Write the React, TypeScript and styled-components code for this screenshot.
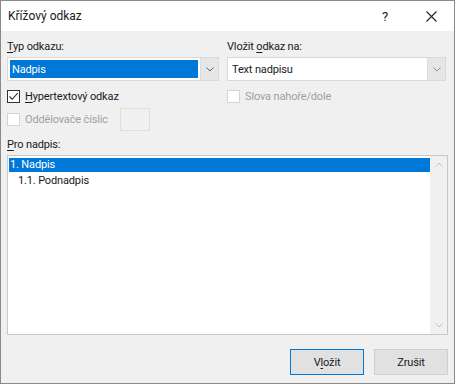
import React from 'react';
import styled, { createGlobalStyle } from 'styled-components';

const GlobalStyle = createGlobalStyle`
  html, body {
    margin: 0;
    padding: 0;
    background: #ffffff;
  }
  body {
    font-family: "Segoe UI", Roboto, "Noto Sans", sans-serif;
    font-size: 11px;
    letter-spacing: -0.15px;
    color: #1a1a1a;
  }
`;

const Window = styled.div`
  width: 455px;
  height: 384px;
  box-sizing: border-box;
  border: 1px solid #8a8a8a;
  background: #f0f0f0;
  display: flex;
  flex-direction: column;
`;

const TitleBar = styled.div`
  height: 30px;
  background: #ffffff;
  display: flex;
  align-items: center;
  padding-left: 7px;
`;

const Title = styled.div`
  flex: 1;
  font-size: 12px;
  letter-spacing: 0;
  color: #1a1a1a;
`;

const TitleButton = styled.div`
  width: 46px;
  height: 30px;
  display: flex;
  align-items: center;
  justify-content: center;
  color: #222;
  font-size: 13px;
`;

const Body = styled.div`
  flex: 1;
  display: flex;
  flex-direction: column;
  padding: 8px 6px 8px 6px;
`;

const TopGrid = styled.div`
  display: grid;
  grid-template-columns: 212px 219px;
  column-gap: 8px;
`;

const Column = styled.div`
  display: flex;
  flex-direction: column;
`;

const Label = styled.div`
  height: 16px;
  line-height: 16px;
  margin-bottom: 2px;
  color: #1a1a1a;
`;

const Mn = styled.span`
  text-decoration: underline;
  text-underline-offset: 2px;
`;

const Select = styled.div`
  height: 24px;
  box-sizing: border-box;
  border: 1px solid #d9d9d9;
  background: #ffffff;
  display: flex;
  align-items: stretch;
`;

const SelectValue = styled.div<{ $active?: boolean }>`
  flex: 1;
  margin: 2px;
  padding-left: 2px;
  display: flex;
  align-items: center;
  background: ${p => (p.$active ? '#0078d7' : 'transparent')};
  color: ${p => (p.$active ? '#ffffff' : '#1a1a1a')};
`;

const SelectArrow = styled.div`
  width: 17px;
  background: #e6e6e6;
  border-left: 1px solid #dcdcdc;
  display: flex;
  align-items: center;
  justify-content: center;
`;

const CheckRow = styled.div<{ $disabled?: boolean }>`
  display: flex;
  align-items: center;
  gap: 5px;
  height: 23px;
  color: ${p => (p.$disabled ? '#a0a0a0' : '#1a1a1a')};
`;

const Box = styled.div<{ $disabled?: boolean }>`
  width: 13px;
  height: 13px;
  box-sizing: border-box;
  border: 1px solid ${p => (p.$disabled ? '#d4d4d4' : '#333333')};
  background: #ffffff;
  display: flex;
  align-items: center;
  justify-content: center;
`;

const SmallInput = styled.div`
  width: 30px;
  height: 23px;
  box-sizing: border-box;
  border: 1px solid #dedede;
  background: #f0f0f0;
  margin-left: 7px;
`;

const ListLabel = styled(Label)`
  margin-top: 6px;
`;

const ListBox = styled.div`
  height: 180px;
  box-sizing: border-box;
  border: 1px solid #c8c8c8;
  background: #ffffff;
  display: flex;
`;

const ListItems = styled.div`
  flex: 1;
  padding-top: 2px;
  padding-left: 1px;
`;

const ListItem = styled.div<{ $selected?: boolean; $level: number }>`
  height: 14px;
  line-height: 14px;
  padding-left: ${p => 1 + p.$level * 8}px;
  margin-bottom: 2px;
  background: ${p => (p.$selected ? '#0078d7' : 'transparent')};
  color: ${p => (p.$selected ? '#ffffff' : '#1a1a1a')};
`;

const ScrollBar = styled.div`
  width: 17px;
  background: #f0f0f0;
  display: flex;
  flex-direction: column;
  justify-content: space-between;
  align-items: center;
  padding: 6px 0 6px;
`;

const Footer = styled.div`
  margin-top: auto;
  display: flex;
  justify-content: flex-end;
  gap: 10px;
`;

const Button = styled.div<{ $default?: boolean }>`
  width: 74px;
  height: 26px;
  box-sizing: border-box;
  border: ${p => (p.$default ? '1px solid #0078d7' : '1px solid #d0d0d0')};
  background: #e1e1e1;
  display: flex;
  align-items: center;
  justify-content: center;
  color: #1a1a1a;
`;

const Chevron = ({ dir = 'down', color = '#606060' }: { dir?: 'down' | 'up'; color?: string }) => (
  <svg width="8" height="5" viewBox="0 0 8 5">
    <path
      d={dir === 'down' ? 'M0.5 0.5 L4 4 L7.5 0.5' : 'M0.5 4.5 L4 1 L7.5 4.5'}
      fill="none"
      stroke={color}
      strokeWidth="1"
    />
  </svg>
);

const Check = () => (
  <svg width="11" height="11" viewBox="0 0 11 11">
    <path d="M1.5 5.5 L4.2 8.3 L9.8 2" fill="none" stroke="#222" strokeWidth="1.1" />
  </svg>
);

const CloseIcon = () => (
  <svg width="11" height="11" viewBox="0 0 11 11">
    <path d="M0.5 0.5 L10.5 10.5 M10.5 0.5 L0.5 10.5" stroke="#222" strokeWidth="1.1" />
  </svg>
);

const App: React.FC = () => {
  const headings = [
    { id: 'h1', text: '1. Nadpis', level: 0 },
    { id: 'h2', text: '1.1. Podnadpis', level: 1 },
  ];

  return (
    <>
      <GlobalStyle />
      <Window>
        <TitleBar>
          <Title>Křížový odkaz</Title>
          <TitleButton>?</TitleButton>
          <TitleButton>
            <CloseIcon />
          </TitleButton>
        </TitleBar>

        <Body>
          <TopGrid>
            <Column>
              <Label>
                <Mn>T</Mn>yp odkazu:
              </Label>
              <Select>
                <SelectValue $active>Nadpis</SelectValue>
                <SelectArrow>
                  <Chevron />
                </SelectArrow>
              </Select>
              <CheckRow style={{ marginTop: 4 }}>
                <Box>
                  <Check />
                </Box>
                <span>
                  <Mn>H</Mn>ypertextový odkaz
                </span>
              </CheckRow>
              <CheckRow $disabled>
                <Box $disabled />
                <span>Oddělovače číslic</span>
                <SmallInput />
              </CheckRow>
            </Column>

            <Column>
              <Label>
                Vložit <Mn>o</Mn>dkaz na:
              </Label>
              <Select>
                <SelectValue>Text nadpisu</SelectValue>
                <SelectArrow>
                  <Chevron color="#909090" />
                </SelectArrow>
              </Select>
              <CheckRow $disabled style={{ marginTop: 4 }}>
                <Box $disabled />
                <span>Slova nahoře/dole</span>
              </CheckRow>
            </Column>
          </TopGrid>

          <ListLabel>
            <Mn>P</Mn>ro nadpis:
          </ListLabel>
          <ListBox>
            <ListItems>
              {headings.map((h, i) => (
                <ListItem key={h.id} $selected={i === 0} $level={h.level}>
                  {h.text}
                </ListItem>
              ))}
            </ListItems>
            <ScrollBar>
              <Chevron dir="up" color="#c0c0c0" />
              <Chevron dir="down" color="#c0c0c0" />
            </ScrollBar>
          </ListBox>

          <Footer>
            <Button $default>
              <span>
                V<Mn>l</Mn>ožit
              </span>
            </Button>
            <Button>Zrušit</Button>
          </Footer>
        </Body>
      </Window>
    </>
  );
};

export default App;
